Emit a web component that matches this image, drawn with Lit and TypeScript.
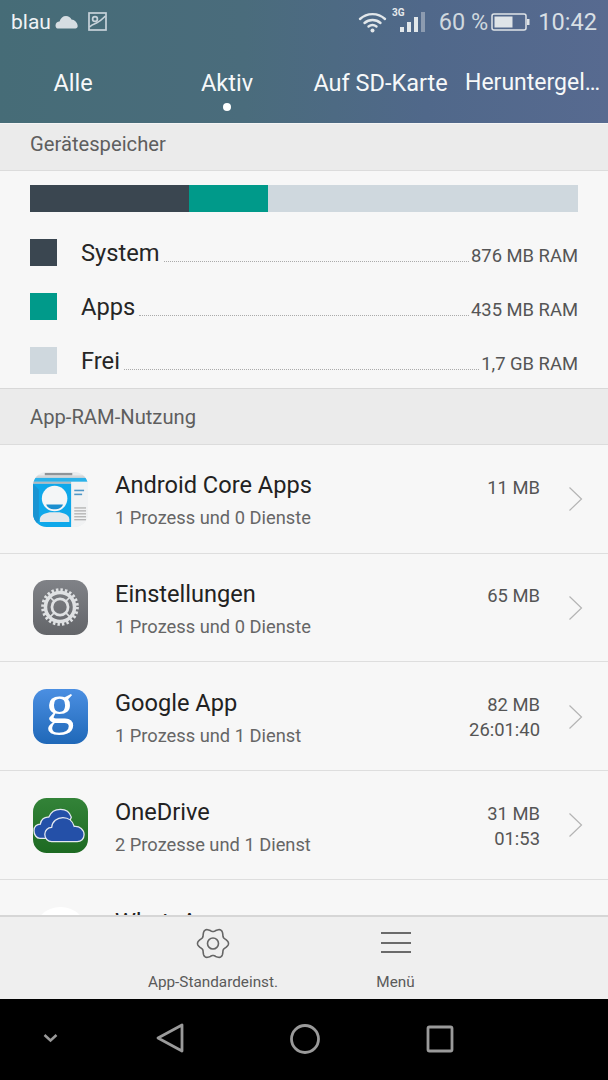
import { LitElement, html, css, svg } from "lit";
import { customElement } from "lit/decorators.js";

const contactIcon = svg`<svg class="appicon" viewBox="0 0 56 56"><defs><clipPath id="c1"><rect width="56" height="56" rx="14"/></clipPath></defs><g clip-path="url(#c1)"><rect width="56" height="56" fill="#e9ecee"/><rect x="12" y="1" width="28" height="2.500" fill="#8f9498"/><rect x="0" y="3.500" width="56" height="3" fill="#d4d6d8"/><rect x="0" y="6" width="56" height="4" fill="#2ab2ea"/><rect x="0" y="10" width="39" height="2" fill="#b4b8bc"/><rect x="0" y="12" width="39" height="44" fill="#0fa8ea"/><path d="M0 12l6 6v32l-6 6z" fill="#1a94d2"/><rect x="39" y="10" width="17" height="46" fill="#f1f2f3"/><rect x="42" y="18" width="10" height="1.600" fill="#4f97c6"/><rect x="42" y="22" width="8" height="1.600" fill="#4f97c6"/><rect x="42" y="36" width="12" height="1.200" fill="#aaa"/><rect x="42" y="39" width="12" height="1.200" fill="#aaa"/><rect x="42" y="42" width="12" height="1.200" fill="#aaa"/><rect x="42" y="45" width="12" height="1.200" fill="#aaa"/><rect x="42" y="48" width="12" height="1.200" fill="#aaa"/><path d="M7 51v-3c0-4 5-6 10-7h10c5 1 10 3 10 7v3z" fill="#e4e9ec"/><circle cx="22" cy="27" r="13" fill="#f4f6f7"/><path d="M13.500 33h17c-1 3.500-5 5-8.500 5s-7.500-1.500-8.500-5z" fill="#1b8fd0"/></g></svg>`;

const settingsIcon = svg`<svg class="appicon" viewBox="0 0 56 56"><defs><linearGradient id="g2" x1="0" y1="0" x2="0" y2="1"><stop offset="0" stop-color="#808287"/><stop offset="1" stop-color="#636569"/></linearGradient></defs><rect width="56" height="56" rx="14" fill="url(#g2)"/><g fill="none" stroke="#dfe1e3"><circle cx="27.500" cy="27.500" r="14.800" stroke-width="3.600"/><circle cx="27.500" cy="27.500" r="17.400" stroke-width="3.600" stroke-dasharray="2.450 2.100"/><circle cx="27.500" cy="27.500" r="8.200" stroke-width="2.800"/><path stroke-width="1.600" d="M17 17l5 5M38 17l-5 5M17 38l5-5M38 38l-5-5"/></g></svg>`;

const googleIcon = svg`<svg class="appicon" viewBox="0 0 56 56"><defs><linearGradient id="g3" x1="0" y1="0" x2="0" y2="1"><stop offset="0" stop-color="#4b8fe2"/><stop offset="1" stop-color="#1f68b8"/></linearGradient></defs><rect width="56" height="56" rx="14" fill="url(#g3)"/><text x="27.500" y="35" text-anchor="middle" class="gl">g</text></svg>`;

const driveIcon = svg`<svg class="appicon" viewBox="0 0 56 56"><defs><linearGradient id="g4" x1="0" y1="0" x2="0" y2="1"><stop offset="0" stop-color="#338338"/><stop offset="1" stop-color="#1d6a22"/></linearGradient></defs><rect width="56" height="56" rx="14" fill="url(#g4)"/><path d="M1 33c0-4 3-6.500 6.500-6.500 .5-4.500 4-7.500 8.500-7 2-5 6.500-8 12-8 5.500 0 9.500 3 11 8L30 41H7c-3.500 0-6-3.500-6-8z" fill="#2450a8" stroke="#e4e9f0" stroke-width="1.300"/><path d="M12 37c0-4 3-7 7-7 .5-6 5.500-10 11.500-10 5.500 0 10 3.500 11.500 9 5.500-.5 10 3 10 8.500 0 4-3 7-7 7H19c-4 0-7-3.500-7-7.500z" fill="#2450a8" stroke="#e4e9f0" stroke-width="1.300"/></svg>`;

const gearPath = (() => {
  const pts: string[] = [];
  for (let i = 0; i < 120; i++) {
    const t = (i / 120) * Math.PI * 2;
    const r = 13.75 + 1.75 * Math.cos(6 * t);
    pts.push(`${(17 + r * Math.cos(t)).toFixed(2)} ${(16.5 + r * Math.sin(t)).toFixed(2)}`);
  }
  return "M" + pts.join("L") + "Z";
})();

const apps = [
  { name: "Android Core Apps", sub: "1 Prozess und 0 Dienste", size: "11 MB", time: "", icon: contactIcon },
  { name: "Einstellungen", sub: "1 Prozess und 0 Dienste", size: "65 MB", time: "", icon: settingsIcon },
  { name: "Google App", sub: "1 Prozess und 1 Dienst", size: "82 MB", time: "26:01:40", icon: googleIcon },
  { name: "OneDrive", sub: "2 Prozesse und 1 Dienst", size: "31 MB", time: "01:53", icon: driveIcon },
];

const legend = [
  { label: "System", value: "876 MB RAM", cls: "c-sys" },
  { label: "Apps", value: "435 MB RAM", cls: "c-app" },
  { label: "Frei", value: "1,7 GB RAM", cls: "c-free" },
];

@customElement("app-root")
export class AppRoot extends LitElement {
  static styles = css`
    :host {
      display: block;
      width: 608px;
      height: 1080px;
      overflow: hidden;
      font-family: Roboto, "Noto Sans", sans-serif;
      background: #f7f7f7;
    }
    .page { display: flex; flex-direction: column; height: 1080px; }
    .top {
      height: 123px;
      flex: none;
      background: linear-gradient(90deg, #466c77 0%, #4a6c7c 40%, #50688a 70%, #576a90 100%);
      color: #fff;
      display: flex;
      flex-direction: column;
    }
    .status {
      height: 43px;
      display: flex;
      align-items: center;
      padding: 0 11px;
      color: #dfe6ea;
      font-size: 21px;
    }
    .status .carrier { color: #f0f3f5; }
    .status .spacer { flex: 1; }
    .cloud { margin-left: 4px; }
    .pic { margin-left: 10px; }
    .signal { margin-left: 5px; }
    .pct { margin-left: 14px; font-size: 23.5px; color: #cfd8de; }
    .bat { margin-left: 3px; }
    .clock { margin-left: 8px; font-size: 23.6px; color: #d8dfe4; }
    .tabs { display: flex; height: 80px; position: relative; }
    .tab {
      font-size: 23.5px;
      text-align: center;
      padding-top: 26px;
      position: relative;
      color: #f6f8f9;
      white-space: nowrap;
    }
    .t1 { width: 146px; }
    .t2 { width: 162px; }
    .t3 { width: 145px; }
    .t4 { flex: 1; text-align: left; padding-left: 12px; font-size: 23px; }
    .dot {
      position: absolute;
      left: 50%;
      margin-left: -4px;
      top: 60px;
      width: 8px;
      height: 8px;
      border-radius: 50%;
      background: #fff;
    }
    .section {
      flex: none;
      background: #ebebeb;
      color: #5e5e5e;
      font-size: 20.2px;
      display: flex;
      align-items: center;
      padding: 0 0 6px 30px;
      height: 40px;
      border-top: 1px solid #f4f4f4;
      border-bottom: 1px solid #dcdcdc;
    }
    .section.s2 { height: 55px; padding-bottom: 0; border-top: 1px solid #d8d8d8; }
    .storage { height: 217px; flex: none; padding: 14px 30px 0; box-sizing: border-box; }
    .bar { display: flex; height: 27px; }
    .c-sys { background: #3a4650; }
    .c-app { background: #009a8a; }
    .c-free { background: #cfd8de; }
    .legend { display: flex; flex-direction: column; margin-top: 27px; }
    .lrow { display: flex; align-items: center; height: 27px; margin-bottom: 27px; }
    .swatch { width: 27px; height: 27px; flex: none; }
    .lname { margin-left: 24px; font-size: 23.7px; color: #262626; }
    .leader { flex: 1; border-bottom: 1px dotted #aaa; align-self: flex-end; margin: 0 2px 4px 4px; height: 1px; }
    .lval { font-size: 18.4px; color: #555; padding-top: 5px; }
    .list { flex: 1; overflow: hidden; min-height: 0; padding-top: 0.5px; }
    .row {
      height: 108px;
      box-sizing: border-box;
      display: flex;
      align-items: center;
      border-bottom: 1px solid #dedede;
      margin-bottom: 0.75px;
      padding-left: 33px;
    }
    .appicon { width: 55px; height: 55px; flex: none; display: block; }
    .gl { font-family: "Liberation Serif", serif; font-size: 58px; fill: #fff; font-weight: 400; }
    .info { margin-left: 27px; flex: 1; display: flex; flex-direction: column; gap: 8px; padding-top: 1.8px; }
    .name { font-size: 23.6px; color: #222; }
    .sub { font-size: 18.3px; color: #666; }
    .right {
      width: 110px;
      align-self: flex-start;
      padding-top: 29px;
      text-align: right;
      font-size: 18.4px;
      color: #555;
      line-height: 25px;
    }
    .chev { margin: 0 25px 0 28px; flex: none; }
    .partial { height: 36px; padding-left: 33px; display: flex; overflow: hidden; position: relative; }
    .partial .blob { width: 55px; height: 55px; border-radius: 50%; background: #fff; margin-top: 26px; flex: none; }
    .partial .name { margin-left: 27px; margin-top: 27px; }
    .bottom {
      height: 84px;
      flex: none;
      background: #efefef;
      border-top: 2px solid #d6d6d6;
      box-sizing: border-box;
      position: relative;
      display: flex;
      padding-left: 122px;
    }
    .act { display: flex; flex-direction: column; align-items: center; color: #5a5a5a; font-size: 15.3px; }
    .act svg { margin-top: 10px; height: 32px; }
    .act span { margin-top: 14px; }
    .a1 { width: 182px; }
    .a2 { width: 183px; }
    .nav {
      height: 81px;
      flex: none;
      background: #000;
      display: flex;
      align-items: center;
      position: relative;
    }
    .nav svg { display: block; }
  `;

  render() {
    return html`<div class="page">
      <div class="top">
        <div class="status">
          <span class="carrier">blau</span>
          <svg class="cloud" width="23" height="14" viewBox="0 0 23 14"><path d="M.500 10.500C.500 8 2.500 6.500 4.500 6.500 5.500 3 8 1 11 1c2.500 0 4.500 1.500 5.500 3.500 3 .2 6 3 6.200 6.500 0 1.500-1 2.500-2.200 2.500H2.500C1.300 13.500.500 12 .500 10.500z" fill="#d6dde2"/></svg>
          <svg class="pic" width="19" height="19" viewBox="0 0 19 19" fill="none" stroke="#c7d2da" stroke-width="1.700"><rect x="1" y="1" width="17" height="17"/><circle cx="7" cy="7" r="2.400"/><path d="M1.500 15c3-3 5-3 7-4s5-3 9-7"/></svg>
          <span class="spacer"></span>
          <svg width="29" height="22" viewBox="0 0 29 22" fill="none" stroke="#e2e7ea" stroke-width="2.400" stroke-linecap="round"><path d="M2 8c7-6.500 18-6.500 25 0"/><path d="M6.500 12c4.500-4 11.500-4 16 0"/><path d="M10.500 15.500c2.500-2 5.500-2 8 0"/><circle cx="14.500" cy="19.500" r="2" fill="#e2e7ea" stroke="none"/></svg>
          <svg class="signal" width="33" height="27" viewBox="0 0 33 27"><text x="0" y="7.500" fill="#e6eaed" font-size="10" font-weight="700" font-family="Roboto">3G</text><rect x="8" y="19" width="4" height="5" fill="#e2e7ea"/><rect x="15" y="14" width="4" height="10" fill="#e2e7ea"/><rect x="22" y="9" width="4" height="15" fill="#e2e7ea"/><rect x="29" y="4" width="4" height="20" fill="#8c9bb0"/></svg>
          <span class="pct">60 %</span>
          <svg class="bat" width="39" height="20" viewBox="0 0 39 20" fill="none"><rect x="1" y="2" width="34" height="16" rx="2" stroke="#dfe4e8" stroke-width="1.500"/><rect x="3.500" y="4.500" width="18" height="11" fill="#dfe4e8"/><rect x="36" y="7" width="2.500" height="6" fill="#dfe4e8"/></svg>
          <span class="clock">10:42</span>
        </div>
        <div class="tabs">
          <div class="tab t1">Alle</div>
          <div class="tab t2">Aktiv<span class="dot"></span></div>
          <div class="tab t3">Auf SD-Karte</div>
          <div class="tab t4">Heruntergel…</div>
        </div>
      </div>
      <div class="section">Gerätespeicher</div>
      <div class="storage">
        <div class="bar">
          <div class="c-sys" style="width:159px"></div>
          <div class="c-app" style="width:79px"></div>
          <div class="c-free" style="flex:1"></div>
        </div>
        <div class="legend">
          ${legend.map(
            (l) => html`<div class="lrow">
              <div class="swatch ${l.cls}"></div>
              <span class="lname">${l.label}</span>
              <span class="leader"></span>
              <span class="lval">${l.value}</span>
            </div>`
          )}
        </div>
      </div>
      <div class="section s2">App-RAM-Nutzung</div>
      <div class="list">
        ${apps.map(
          (a) => html`<div class="row">
            ${a.icon}
            <div class="info">
              <div class="name">${a.name}</div>
              <div class="sub">${a.sub}</div>
            </div>
            <div class="right">${a.size}${a.time ? html`<br />${a.time}` : ""}</div>
            <svg class="chev" width="15" height="26" viewBox="0 0 15 26" fill="none" stroke="#b4b4b4" stroke-width="1.200"><path d="M1.500 1.500L13.500 13 1.500 24.500"/></svg>
          </div>`
        )}
        <div class="partial"><div class="blob"></div><div class="name">WhatsApp</div></div>
      </div>
      <div class="bottom">
        <div class="act a1">
          <svg width="34" height="32" viewBox="0 0 34 32" fill="none" stroke="#666" stroke-width="1.600" stroke-linejoin="round"><path d=${gearPath}/><circle cx="17" cy="16.500" r="5.500"/></svg>
          <span>App-Standardeinst.</span>
        </div>
        <div class="act a2">
          <svg width="30" height="32" viewBox="0 0 30 32" fill="none" stroke="#6a6a6a" stroke-width="2.200"><path d="M0 6h30M0 16h30M0 25h30"/></svg>
          <span>Menü</span>
        </div>
      </div>
      <div class="nav">
        <svg width="608" height="81" viewBox="0 0 608 81" fill="none" stroke="#9a9a9a" stroke-width="2.800"><path d="M44.500 36l6 5.500 6-5.500" stroke-width="2.500"/><path d="M182 26v26l-24-13z" stroke-linejoin="round"/><circle cx="305" cy="40" r="13.500"/><rect x="428" y="28" width="24" height="24" rx="1.500"/></svg>
      </div>
    </div>`;
  }
}
